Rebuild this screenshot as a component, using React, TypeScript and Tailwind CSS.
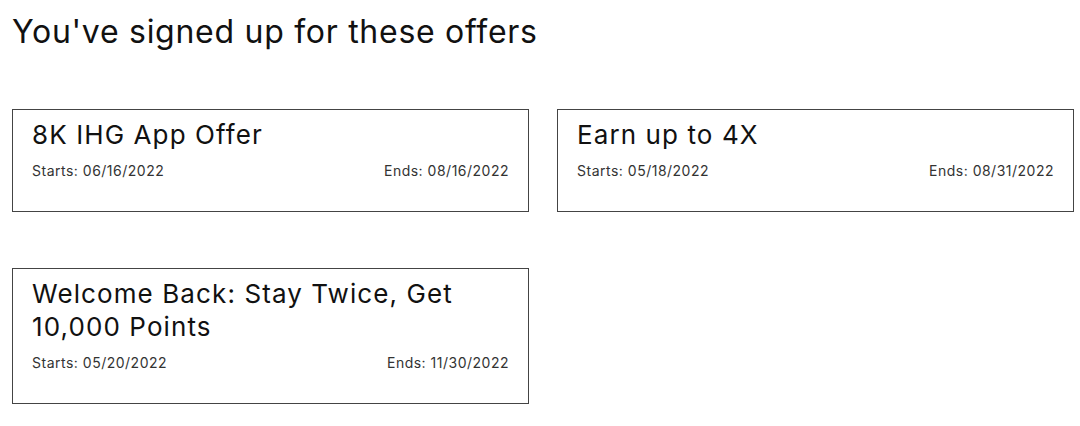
import React from 'react';

type Offer = {
  title: string;
  starts: string;
  ends: string;
};

const offers: Offer[] = [
  { title: '8K IHG App Offer', starts: '06/16/2022', ends: '08/16/2022' },
  { title: 'Earn up to 4X', starts: '05/18/2022', ends: '08/31/2022' },
  { title: 'Welcome Back: Stay Twice, Get 10,000 Points', starts: '05/20/2022', ends: '11/30/2022' },
];

const OfferCard: React.FC<{ offer: Offer }> = ({ offer }) => {
  return (
    <div className="border border-[#444] bg-white px-[19px] pt-[8px] pb-[30px]">
      <h3 className="text-[26px] leading-[33px] tracking-[1.1px] text-[#111] font-normal">{offer.title}</h3>
      <div className="mt-[10px] flex items-center justify-between text-[14px] leading-[20px] tracking-[0.5px] text-[#333]">
        <span>Starts: {offer.starts}</span>
        <span>Ends: {offer.ends}</span>
      </div>
    </div>
  );
};

export default function App() {
  return (
    <div className="min-h-[426px] bg-white pl-3 pt-3 font-['Inter',sans-serif]">
      <h2 className="text-[32px] leading-[40px] tracking-[0.72px] text-[#111] font-normal">You've signed up for these offers</h2>
      <div className="mt-[57px] grid grid-cols-[517px_517px] gap-x-[28px] gap-y-[56px] items-start">
        {offers.map((o) => (
          <OfferCard key={o.title} offer={o} />
        ))}
      </div>
    </div>
  );
}
